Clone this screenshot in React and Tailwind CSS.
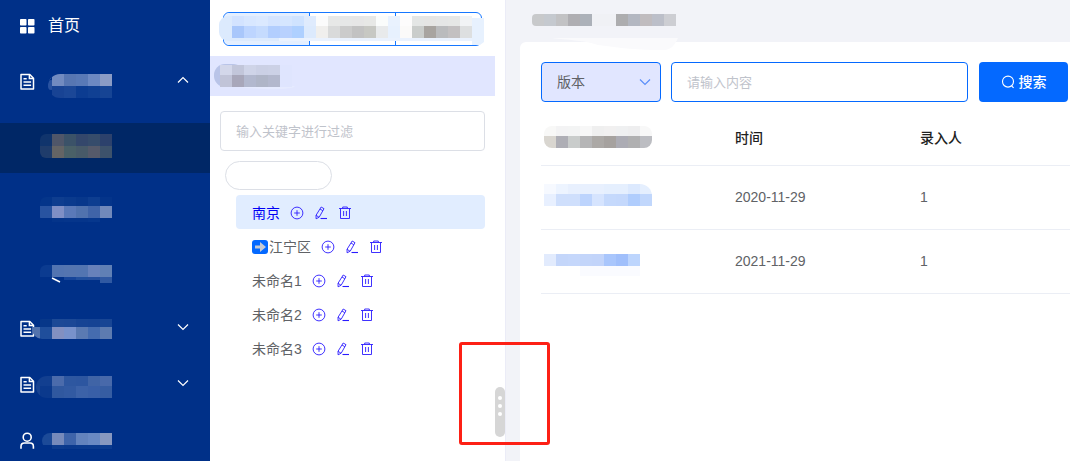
import { useState } from "react"
import clsx from "clsx"

const FONT = "font-['Liberation_Sans','Noto_Sans_CJK_SC',sans-serif]"

// Masked label: every row is [x, y, height, colours], cells are 12px wide
function Mosaic({ width, height, rows, className, children }) {
  return (
    <svg width={width} height={height} viewBox={`0 0 ${width} ${height}`} className={clsx("shrink-0", className)} aria-hidden="true">
      {children}
      {rows.map(([x, y, h, colors]) =>
        colors.map((color, i) => (
          <rect key={`${x}-${y}-${i}`} x={x + i * 12} y={y} width={12} height={h} fill={color} shapeRendering="crispEdges" />
        )),
      )}
    </svg>
  )
}

function GridIcon() {
  return (
    <svg width="16" height="16" viewBox="0 0 16 16" fill="#fff" aria-hidden="true">
      <rect x="0" y="1" width="6.500" height="6.500" rx="0.800" />
      <rect x="8" y="1" width="6.500" height="6.500" rx="0.800" />
      <rect x="0" y="9" width="6.500" height="6.500" rx="0.800" />
      <rect x="8" y="9" width="6.500" height="6.500" rx="0.800" />
    </svg>
  )
}

function DocIcon() {
  return (
    <svg width="16" height="18" viewBox="0 0 16 18" fill="none" stroke="#fff" strokeWidth="1.5" aria-hidden="true">
      <path d="M1 1.500h8.800l3.700 3.700v10.900H1z" strokeLinejoin="round" />
      <path d="M9.400 1.800v3.800h3.800M3.500 5.700h3.200M3.500 9h7.600M3.500 12.200h7.600" />
    </svg>
  )
}

function UserIcon() {
  return (
    <svg width="16" height="18" viewBox="0 0 16 18" fill="none" stroke="#fff" strokeWidth="1.6" aria-hidden="true">
      <circle cx="7.200" cy="5.200" r="4" />
      <path d="M1 16.800v-2.400c0-2.200 1.200-3.400 3.400-3.400H10c2.200 0 3.400 1.200 3.400 3.400v2.400" />
    </svg>
  )
}

function Chevron({ up, className }) {
  return (
    <svg width="12" height="8" viewBox="0 0 12 8" fill="none" stroke="currentColor" strokeWidth="1.2" className={className} aria-hidden="true">
      <path d={up ? "M1 6.500l5-5 5 5" : "M1 1.500l5 5 5-5"} />
    </svg>
  )
}

function PlusIcon() {
  return (
    <svg width="14" height="14" viewBox="0 0 14 14" fill="none" stroke="currentColor" strokeWidth="0.9" aria-hidden="true">
      <circle cx="7" cy="7" r="5.900" />
      <path d="M7 4.200v5.600M4.200 7h5.600" />
    </svg>
  )
}

function EditIcon() {
  return (
    <svg width="14" height="14" viewBox="0 0 14 14" fill="none" stroke="currentColor" strokeWidth="0.9" aria-hidden="true">
      <path d="M7.200 1l2.800 1.700-4.800 8.500-3.100 1.600-.1-3.500zM6 3l2.800 1.700M2 9.300l2.900 1.800" strokeLinejoin="round" />
      <path d="M6.500 12.500h6.500" strokeWidth="1.100" />
    </svg>
  )
}

function TrashIcon() {
  return (
    <svg width="14" height="14" viewBox="0 0 14 14" fill="none" stroke="currentColor" strokeWidth="0.9" aria-hidden="true">
      <path d="M1 2.500h12M4.700 2.300V1h4.600v1.300M2.500 2.500v10h9v-10M5.600 5v5M8.400 5v5" />
    </svg>
  )
}

function SearchIcon() {
  return (
    <svg width="14" height="14" viewBox="0 0 14 14" fill="none" stroke="currentColor" strokeWidth="1.100" aria-hidden="true">
      <circle cx="7" cy="6.600" r="5.500" />
      <path d="M10.600 10.800l2 2" />
    </svg>
  )
}

const subItems = [
  {
    label: "子菜单一",
    height: 24,
    className: "rounded-l-md mb-1",
    rows: [
      [0, 0, 12, ["#10346c", "#4f5669", "#3b5268", "#34476b", "#364c6b", "#2c416c"]],
      [0, 12, 12, ["#1f3c6b", "#646465", "#4a6067", "#485a68", "#565a6a", "#3d526b"]],
    ],
  },
  {
    label: "子菜单二",
    height: 26,
    className: "rounded-l-md",
    rows: [
      [0, 0, 9, ["#04358a", "#0e3d8f", "#0a3a8d", "#07378b", "#0d3d90", "#04348a"]],
      [0, 9, 12, ["#2853a0", "#7f8fc5", "#5a79b8", "#5072ae", "#4064a8", "#7189bb"]],
      [12, 21, 4, ["#04348a", "#05358b", "#05358b", "#06378d"]],
    ],
  },
  {
    label: "子菜单三",
    height: 18,
    className: "rounded-tl-md mt-1",
    mark: true,
    rows: [
      [0, 0, 12, ["#0b3b90", "#5274b1", "#5475b0", "#5375b1", "#6881ba", "#6080b5"]],
      [24, 12, 3, ["#16459a", "#22509e", "#264f9d"]],
      [60, 12, 6, ["#3059a2"]],
    ],
  },
]

function MenuGroup({ icon, label, rows, width, height, arrow, maskClass, children }) {
  return (
    <a href="#" aria-label={label} className="flex h-14 items-center pl-5 pr-[21px]">
      <span className="w-4 shrink-0">{icon}</span>
      <Mosaic width={width} height={height} rows={rows} className={clsx("rounded-l-xl", maskClass)}>
        {children}
      </Mosaic>
      {arrow && <Chevron up={arrow === "up"} className="mb-1 ml-auto text-white" />}
    </a>
  )
}

function Sidebar() {
  return (
    <nav className="w-[210px] shrink-0 overflow-hidden bg-[#003088] text-white">
      <a href="#" className="mb-[2px] flex h-[52px] items-center gap-3 pl-5 text-base">
        <GridIcon />
        首页
      </a>
      <MenuGroup
        icon={<DocIcon />}
        label="菜单一"
        arrow="up"
        width={64}
        height={24}
        maskClass="ml-3 mt-2"
        rows={[
          [4, 0, 12, ["#728bc0", "#5776b2", "#5979b6", "#6d89c2", "#8b9cc5"]],
          [4, 12, 12, ["#184394", "#1b4797", "#0c3c91", "#104093", "#164494"]],
        ]}
      >
        <rect x="0" y="6" width="6" height="10" rx="3" fill="#2952a0" />
        <path d="M1 5l3-4.500" stroke="#fff" strokeWidth="1.500" />
      </MenuGroup>
      <div className="flex flex-col gap-3 pb-1 pt-[13px]">
        {subItems.map((item, i) => (
          <a
            key={item.label}
            href="#"
            aria-label={item.label}
            className={clsx("flex h-[50px] items-center pl-10", i === 0 && "bg-[#002766]")}
          >
            <Mosaic width={72} height={item.height} rows={item.rows} className={item.className}>
              {item.mark && <path d="M12 13l8 4" stroke="#fff" strokeWidth="1.500" />}
            </Mosaic>
          </a>
        ))}
      </div>
      <MenuGroup
        icon={<DocIcon />}
        label="菜单二"
        arrow="down"
        width={80}
        height={20}
        maskClass="-ml-1"
        rows={[
          [8, 0, 8, ["#073789", "#1c4996", "#1b4896", "#164494", "#154394", "#184594"]],
          [-4, 8, 12, ["#5373ad", "#1f4e9b", "#8290c1", "#7892cb", "#5a7ab2", "#456caf", "#5d7bb0"]],
        ]}
      />
      <MenuGroup
        icon={<DocIcon />}
        label="菜单三"
        arrow="down"
        width={76}
        height={22}
        maskClass="mt-1"
        rows={[
          [-8, 0, 10, ["#16418f", "#123f90", "#4b6bab", "#2e57a0", "#2d56a0", "#4064a6", "#4869aa"]],
          [-8, 10, 12, ["#184391", "#0b398c", "#30589f", "#325aa2", "#3c62a8", "#395fa7", "#365da2"]],
        ]}
      />
      <MenuGroup
        icon={<UserIcon />}
        label="用户"
        width={70}
        height={16}
        maskClass="ml-[6px]"
        rows={[
          [-2, 0, 12, ["#1c4a98", "#768abb", "#3e64aa", "#6383bd", "#6989c3", "#8798c0"]],
          [10, 12, 4, ["#0c3b8e", "#0a398d", "#0a3a8e", "#0a3a8e", "#0b3b8f"]],
        ]}
      />
    </nav>
  )
}

const tree = [
  { name: "南京", active: true },
  { name: "江宁区", arrow: true },
  { name: "未命名1" },
  { name: "未命名2" },
  { name: "未命名3" },
]

function TreeNode({ node, active, onSelect }) {
  return (
    <li
      onClick={onSelect}
      className={clsx("flex h-[34px] items-center gap-[10px] rounded pl-4 pt-[2px] text-sm", active ? "bg-[#e1edff] text-[#0000f5]" : "text-[#606266]")}
    >
      <span className="flex items-center gap-px">
        {node.arrow && (
          <svg width="16" height="14" viewBox="0 0 16 14" aria-hidden="true">
            <rect width="16" height="14" rx="3" fill="#0469ff" />
            <path d="M3 5.500h5V2l6 5-6 5V8.500H3z" fill="#c5cad4" />
          </svg>
        )}
        {node.name}
      </span>
      <span className="flex gap-[10px] text-[#2a1bff]">
        <button type="button" aria-label="新增"><PlusIcon /></button>
        <button type="button" aria-label="编辑"><EditIcon /></button>
        <button type="button" aria-label="删除"><TrashIcon /></button>
      </span>
    </li>
  )
}

function TreePanel() {
  const [current, setCurrent] = useState("南京")

  return (
    <section className="flex w-[295px] shrink-0 bg-white">
      <div className="flex-1">
        <div className="relative mx-[13px] mt-3 flex h-[34px] rounded-md border border-[#1677ff]">
          <button type="button" aria-label="标签一" className="flex-1 rounded-l-md bg-[#e4efff]" />
          <button type="button" aria-label="标签二" className="flex-1 border-x border-[#1677ff]" />
          <button type="button" aria-label="标签三" className="flex-1" />
          <Mosaic
            width={266}
            height={29}
            className="pointer-events-none absolute -left-[5px] top-[3px]"
            rows={[
              [13, 0, 10, ["#d3e3ff", "#d8e7ff", "#dbe9ff", "#d4e4ff", "#d5e6ff", "#cfe3ff", "#dfebfd"]],
              [97, 0, 10, ["#fbfbfb", "#e7e8e7", "#e6e7e7", "#e6e6e6", "#e7e8e6", "#fafcfb", "#e9f2fe", "#fdfcfc"]],
              [193, 0, 10, ["#e4e6e5", "#e5e5e4", "#e5e6e6", "#e6e7e6", "#f1f3f5"]],
              [13, 10, 12, ["#a9c7fb", "#bdd5ff", "#c5dbfe", "#b2cefe", "#b8d1fe", "#aed0ff", "#dceafd"]],
              [97, 10, 12, ["#f0efed", "#d9dada", "#cbcbcb", "#c2c2c2", "#c7c8c3", "#e8eaeb", "#e7f1fe", "#fbfaf9"]],
              [193, 10, 12, ["#cacdcb", "#a8a4a0", "#babbbd", "#c3c0c1", "#dddfe0"]],
            ]}
          >
            <rect x="0" y="0" width="97" height="25" rx="9" fill="#dceafd" />
            <path d="M60 22h197v3H60z" fill="#eaf2fe" />
            <path d="M253 2h12v24l-4 3h-8z" fill="#e7f1fe" />
          </Mosaic>
        </div>
        <div className="mt-[10px] flex h-10 items-center bg-[#e1e6ff] pl-1">
          <Mosaic
            width={82}
            height={27}
            rows={[
              [6, 2, 10, ["#d3d7ea", "#c2c6da", "#cfd4e8", "#cbd0e5", "#ccd1e6", "#dfe5fe"]],
              [6, 12, 12, ["#c1c4d8", "#a8a7ba", "#b2b8ce", "#afb5c7", "#b3b8cd", "#dfe5fe"]],
            ]}
          >
            <rect x="0" y="1" width="30" height="23" rx="11" fill="#b9c4e8" />
            <path d="M24 23h57c-2 4-30 4-57 1z" fill="#e6ebff" />
          </Mosaic>
        </div>
        <div className="px-[10px] pt-[15px]">
          <input
            type="text"
            aria-label="关键字过滤"
            placeholder="输入关键字进行过滤"
            className="h-10 w-full rounded border border-[#dcdfe6] px-[15px] text-[13px] text-[#606266] placeholder:text-[#bfc3cb]"
          />
          <button type="button" aria-label="全部" className="ml-[5px] mt-[10px] block h-[29px] w-[107px] rounded-full border border-[#dcdfe6]" />
          <ul className="ml-4 mt-[5px]">
            {tree.map((node) => (
              <TreeNode key={node.name} node={node} active={current === node.name} onSelect={() => setCurrent(node.name)} />
            ))}
          </ul>
        </div>
      </div>
      <button
        type="button"
        aria-label="调整宽度"
        className="mt-[387px] flex h-[50px] w-[10px] cursor-col-resize flex-col items-center gap-1 rounded-full bg-[#d6d6d6] pt-[9px]"
      >
        <i className="size-1 rounded-full bg-white" />
        <i className="size-1 rounded-full bg-white" />
        <i className="size-1 rounded-full bg-white" />
      </button>
    </section>
  )
}

const records = [
  {
    date: "2020-11-29",
    user: "1",
    maskClass: "mb-1 rounded-tr-xl",
    rows: [
      [0, 0, 10, ["#f6f9ff", "#edf4ff", "#e8f0fe", "#e8f0fe", "#e8f0fe", "#e5effe", "#e5effe", "#dce9fe", "#e5effe"]],
      [0, 10, 12, ["#e8f0ff", "#cfdffc", "#cfdffc", "#bdd4fd", "#d6e4fe", "#c5d9fc", "#c4d8fc", "#b0cdfd", "#c1d7fc"]],
    ],
  },
  {
    date: "2021-11-29",
    user: "1",
    maskClass: "mt-2",
    rows: [
      [0, 0, 12, ["#e2ebfd", "#c4d6fa", "#c5d7fb", "#c3d5fa", "#c2d4fa", "#a9c6fc", "#a0bffb", "#bdd5fd"]],
      [36, 12, 10, ["#fafbff", "#fafbff", "#fafbff", "#fafbff", "#fafbff"]],
    ],
  },
]

function Content() {
  return (
    <main className="relative flex min-w-0 flex-1 flex-col overflow-hidden border-l border-[#ebecf7] bg-[#f2f3f8] pl-[14px]">
      <div className="h-[42px] shrink-0 pl-3 pt-[14px]">
        <Mosaic
          width={144}
          height={12}
          className="rounded-l"
          rows={[[0, 0, 12, ["#c8c9cb", "#c5c9cf", "#c2c2c4", "#afaeb2", "#acb1b9", "#f0f1f5", "#f0f1f5", "#adadaf", "#b3b7c1", "#c0bcbf", "#bcbfc9", "#cdced3"]]]}
        />
      </div>
      <div className="flex-1 rounded-tl-md bg-white pl-[21px] pt-5">
        <form className="flex pr-[2px]" onSubmit={(e) => e.preventDefault()}>
          <div className="relative w-[120px] shrink-0">
            <select
              aria-label="搜索字段"
              className="h-10 w-full appearance-none rounded border border-[#0469ff] bg-[#e1e6ff] px-[15px] text-sm text-[#606266]"
            >
              <option>版本</option>
            </select>
            <Chevron className="pointer-events-none absolute right-[10px] top-4 text-[#5b8ff9]" />
          </div>
          <input
            type="text"
            aria-label="搜索内容"
            placeholder="请输入内容"
            className="ml-[10px] h-10 min-w-0 flex-1 rounded border border-[#0469ff] px-[15px] text-[13px] text-[#606266] placeholder:text-[#bfc3cb]"
          />
          <button type="submit" className="ml-[11px] flex h-10 w-[89px] items-center justify-center gap-1 rounded bg-[#0469ff] text-sm font-medium text-white">
            <SearchIcon />
            搜索
          </button>
        </form>
        <table className="mt-2 w-full table-fixed text-left text-sm text-[#606266]">
          <thead>
            <tr className="h-[55px] border-b border-[#ebeef5] text-[#1f1f1f]">
              <th className="w-[185px] pl-[3px]">
                <Mosaic
                  width={108}
                  height={22}
                  className="rounded-lg"
                  rows={[
                    [0, 0, 10, ["#f8f8f7", "#f3f3f4", "#f3f4f4", "#f7f7f7", "#efefef", "#f1f0f0", "#eff0f1", "#eeeeef", "#f8f8f8"]],
                    [0, 10, 12, ["#d9d6d0", "#aeaeb5", "#c9cccb", "#b5b5b6", "#aca9a6", "#a6a29f", "#acacb4", "#b0b0b1", "#bcbdc2"]],
                  ]}
                />
              </th>
              <th className="w-[185px] pl-[9px] pt-px font-medium">时间</th>
              <th className="pl-[9px] pt-px font-medium">录入人</th>
            </tr>
          </thead>
          <tbody>
            {records.map((r) => (
              <tr key={r.date} className="h-16 border-b border-[#ebeef5]">
                <td className="pl-[3px]">
                  <Mosaic width={108} height={22} rows={r.rows} className={r.maskClass} />
                </td>
                <td className="pl-[9px]">{r.date}</td>
                <td className="pl-[9px]">{r.user}</td>
              </tr>
            ))}
          </tbody>
        </table>
      </div>
      <svg width="126" height="13" viewBox="0 0 126 13" className="pointer-events-none absolute left-[46px] top-[37px]" aria-hidden="true">
        <path d="M0 1h126c-3 7-7 12-14 12-26 0-44-2-66-5C30 3 16 3 0 1z" fill="#fafafc" />
      </svg>
    </main>
  )
}

export default function App() {
  return (
    <div className={clsx("relative flex h-screen overflow-hidden", FONT)}>
      <Sidebar />
      <TreePanel />
      <Content />
      {/* highlight around the drag handle */}
      <div className="pointer-events-none absolute left-[459px] top-[342px] h-[103px] w-[91px] rounded-[3px] border-3 border-[#fd2015]" />
    </div>
  )
}
